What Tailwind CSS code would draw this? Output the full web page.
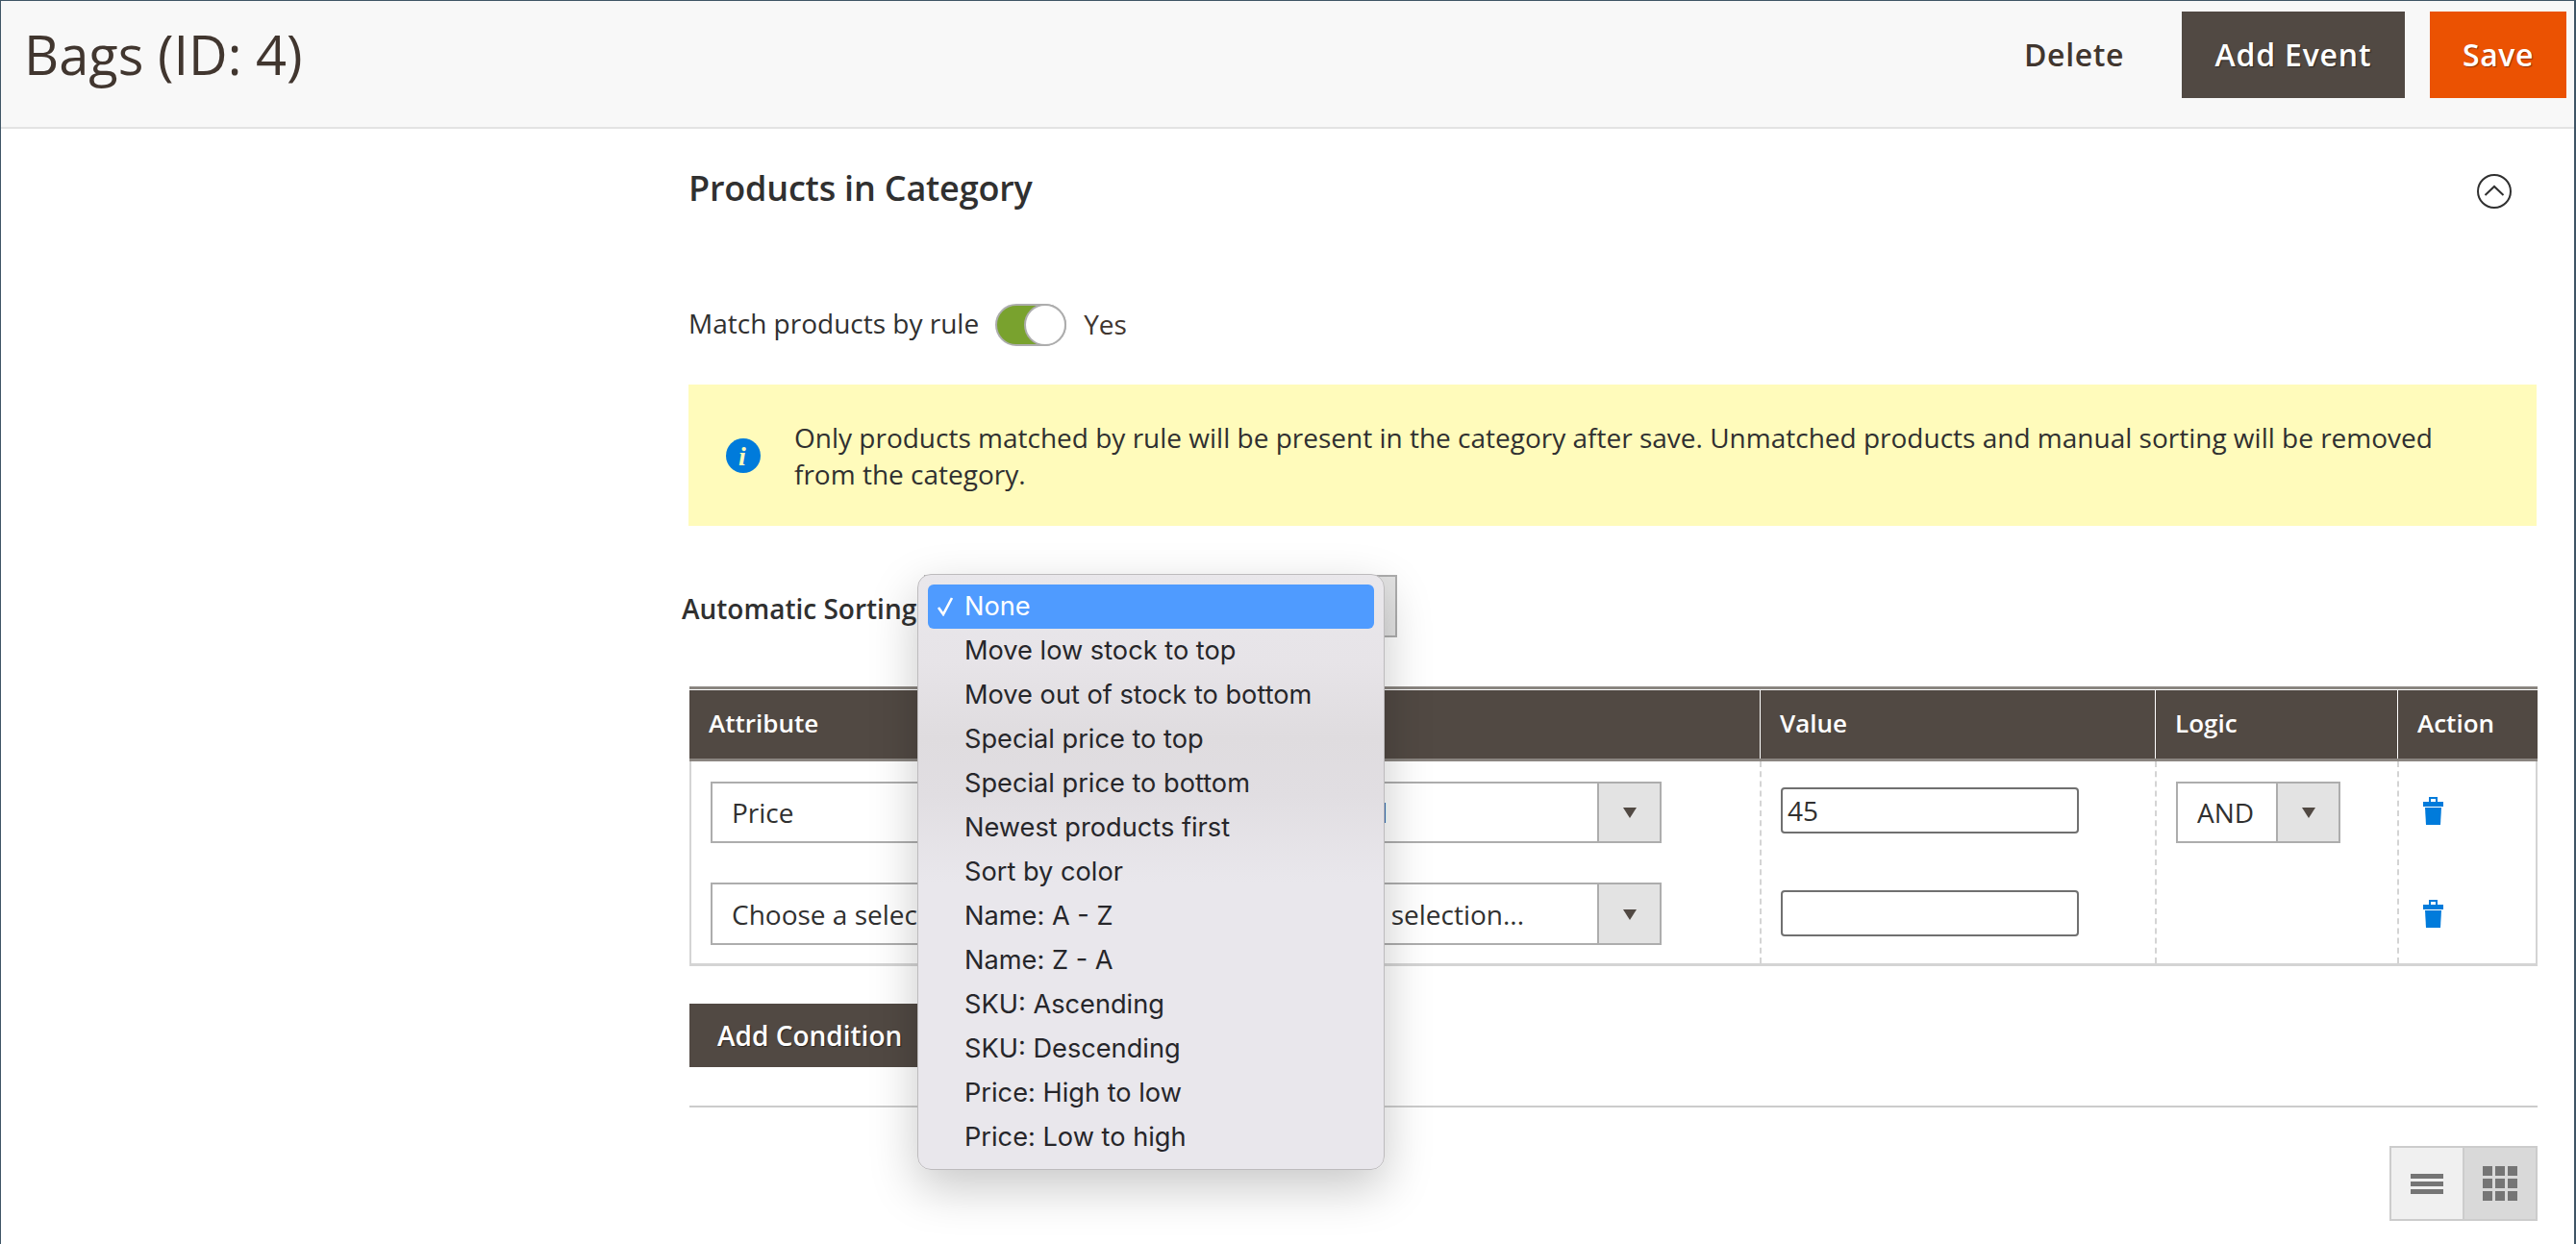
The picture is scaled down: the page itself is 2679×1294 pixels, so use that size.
<!DOCTYPE html>
<html><head><meta charset="utf-8"><script src="https://cdn.jsdelivr.net/npm/@tailwindcss/browser@4"></script></head>
<body class="bg-white">
<div class="relative w-[2679px] h-[1294px] overflow-hidden bg-white border-t border-l border-r-[2px] border-[#3f5566] font-['Open_Sans',sans-serif] text-[#303030]">
  <header class="h-[133px] bg-[#f8f8f8] border-b-[2px] border-[#e3e3e3] flex items-start pl-[24px] pr-[8px]">
    <h1 class="text-[56px] leading-[56px] mt-[27px] font-normal text-[#41362f]">Bags (ID: 4)</h1>
    <div class="ml-auto flex items-start mt-[11px]">
      <button class="h-[90px] text-[32px] font-semibold tracking-[0.6px] text-[#41362f] mr-[60px]">Delete</button>
      <button class="h-[90px] w-[232px] bg-[#514943] text-white text-[32px] font-semibold tracking-[0.8px] [text-shadow:1px_1px_1px_rgba(0,0,0,0.5)] mr-[26px]">Add Event</button>
      <button class="h-[90px] w-[142px] bg-[#eb5202] text-white text-[32px] font-semibold tracking-[0.6px] [text-shadow:1px_1px_1px_rgba(0,0,0,0.4)]">Save</button>
    </div>
  </header>

  <main class="w-[1924px] ml-[713px]">
    <div class="flex items-center justify-between h-[126px] pr-[26px]">
      <h2 class="text-[36px] font-semibold tracking-[-0.2px] pl-[2px] pb-[3px]">Products in Category</h2>
      <svg class="mt-[3px]" width="36" height="36" viewBox="0 0 36 36" fill="none" stroke="#303030" stroke-width="2"><circle cx="18" cy="18" r="17"/><path d="M8.5 22l9.5-9 9.5 9"/></svg>
    </div>
    <div class="flex items-center h-[44px] mt-[56px] pl-[2px] text-[28px]">
      <span class="pb-[5px]">Match products by rule</span>
      <span class="relative ml-[17px] w-[74px] h-[44px] rounded-full bg-[#79a22e] border-[2px] border-[#adadad]">
        <span class="absolute right-[-2px] top-[-2px] w-[44px] h-[44px] rounded-full bg-white border-[2px] border-[#adadad]"></span>
      </span>
      <span class="ml-[18px] pb-[2px] text-[#41362f]">Yes</span>
    </div>
    <div class="flex items-center h-[147px] mt-[40px] bg-[#fffbbb] ml-[2px] pl-[39px] pr-[90px]">
      <svg class="shrink-0" width="36" height="36" viewBox="0 0 36 36"><circle cx="18" cy="18" r="18" fill="#007bdb"/><text x="17" y="28" text-anchor="middle" font-family="Liberation Serif" font-style="italic" font-weight="700" font-size="28" fill="#fffbbb">i</text></svg>
      <p class="ml-[35px] text-[28px] leading-[38px]">Only products matched by rule will be present in the category after save. Unmatched products and manual sorting will be removed from the category.</p>
    </div>
    <div class="h-[66px] mt-[50px] flex items-center">
      <span class="w-[246px] -ml-[5px] pt-[5px] text-[28px] font-semibold whitespace-nowrap">Automatic Sorting</span>
      <div class="ml-[6px] w-[492px] h-[65px] border-[2px] border-[#adadad] bg-[#e3e3e3]"></div>
    </div>

    <div class="mt-[51px] ml-[3px] w-[1922px] text-[28px]">
      <div class="flex h-[78px] bg-[#514943] border-t-[3px] border-b-[3px] border-[#8a8580] text-white font-semibold text-[26px]">
        <div class="w-[574px] pl-[20px] pb-[2px] flex items-center border-t border-white">Attribute</div>
        <div class="w-[539px] border-t border-white"></div>
        <div class="w-[411px] pl-[20px] pb-[2px] flex items-center border-l border-t border-white">Value</div>
        <div class="w-[252px] pl-[20px] pb-[2px] flex items-center border-l border-t border-white">Logic</div>
        <div class="flex-1 pl-[20px] pb-[2px] flex items-center border-l border-t border-white">Action</div>
      </div>
      <div class="flex h-[213px] border-x-[2px] border-b-[3px] border-[#d4d4d4]">
        <div class="w-[1111px] flex flex-col pl-[20px] pt-[21px] gap-[41px]">
          <div class="flex h-[64px]">
            <div class="w-[480px] h-full border-[2px] border-[#adadad] pl-[20px] flex items-center">Price</div>
            <div class="w-[509px] h-full border-[2px] border-[#adadad] flex items-stretch">
              <span class="flex-1 pl-[100px] tracking-[3px] flex items-center whitespace-nowrap">Is equal</span>
              <span class="w-[65px] bg-[#e3e3e3] border-l-[2px] border-[#adadad] flex items-center justify-center"><svg width="14" height="14" viewBox="0 0 14 14"><path d="M0 2h14L7 13z" fill="#514943"/></svg></span>
            </div>
          </div>
          <div class="flex h-[65px]">
            <div class="w-[480px] h-full border-[2px] border-[#adadad] pl-[20px] flex items-center whitespace-nowrap overflow-hidden">Choose a selection...</div>
            <div class="w-[509px] h-full border-[2px] border-[#adadad] flex items-stretch">
              <span class="flex-1 pl-[98px] flex items-center whitespace-nowrap">Choose a selection...</span>
              <span class="w-[65px] bg-[#e3e3e3] border-l-[2px] border-[#adadad] flex items-center justify-center"><svg width="14" height="14" viewBox="0 0 14 14"><path d="M0 2h14L7 13z" fill="#514943"/></svg></span>
            </div>
          </div>
        </div>
        <div class="w-[411px] border-l-[2px] border-dashed border-[#d4d4d4] pl-[20px] pt-[27px] flex flex-col gap-[59px]">
          <input value="45" class="w-[310px] h-[48px] border-[2px] border-[#707070] rounded-[4px] px-[5px] text-[28px] outline-none">
          <input class="w-[310px] h-[48px] border-[2px] border-[#707070] rounded-[4px] px-[5px] text-[28px] outline-none">
        </div>
        <div class="w-[252px] border-l-[2px] border-dashed border-[#d4d4d4] pl-[20px] pt-[21px]">
          <div class="flex h-[64px] w-[171px] border-[2px] border-[#adadad]">
            <span class="flex-1 pl-[20px] flex items-center">AND</span>
            <span class="w-[65px] bg-[#e3e3e3] border-l-[2px] border-[#adadad] flex items-center justify-center"><svg width="14" height="14" viewBox="0 0 14 14"><path d="M0 2h14L7 13z" fill="#514943"/></svg></span>
          </div>
        </div>
        <div class="flex-1 border-l-[2px] border-dashed border-[#d4d4d4] pl-[25px] pt-[37px] flex flex-col gap-[78px]">
          <svg width="21" height="29" viewBox="0 0 21 29" fill="#007bdb"><path fill-rule="evenodd" d="M6 0h9v5h6v5H0V5h6zM8 2v3h5V2z"/><path d="M2 11h17l-1 18H3z"/></svg>
          <svg width="21" height="29" viewBox="0 0 21 29" fill="#007bdb"><path fill-rule="evenodd" d="M6 0h9v5h6v5H0V5h6zM8 2v3h5V2z"/><path d="M2 11h17l-1 18H3z"/></svg>
        </div>
      </div>
    </div>

    <div class="ml-[3px] mt-[39px] w-[250px] h-[66px] bg-[#514943] text-white text-[28px] font-semibold [text-shadow:1px_1px_1px_rgba(0,0,0,0.5)] flex items-center pl-[29px]">Add Condition</div>
    <div class="ml-[3px] mt-[40px] w-[1922px] h-[2px] bg-[#cccccc]"></div>
    <div class="ml-[3px] w-[1922px] mt-[40px] flex justify-end">
      <div class="flex w-[154px] h-[78px] border-[2px] border-[#cccccc]">
        <div class="flex-1 bg-[#f0f0f0] border-r-[2px] border-[#cccccc] flex flex-col items-center justify-center gap-[3px]">
          <span class="w-[34px] h-[5px] bg-[#757575]"></span><span class="w-[34px] h-[5px] bg-[#757575]"></span><span class="w-[34px] h-[5px] bg-[#757575]"></span>
        </div>
        <div class="flex-1 bg-[#d9d9d9] flex items-center justify-center">
          <div class="grid grid-cols-3 gap-[3px]">
            <span class="w-[10px] h-[10px] bg-[#757575]"></span><span class="w-[10px] h-[10px] bg-[#757575]"></span><span class="w-[10px] h-[10px] bg-[#757575]"></span>
            <span class="w-[10px] h-[10px] bg-[#757575]"></span><span class="w-[10px] h-[10px] bg-[#757575]"></span><span class="w-[10px] h-[10px] bg-[#757575]"></span>
            <span class="w-[10px] h-[10px] bg-[#757575]"></span><span class="w-[10px] h-[10px] bg-[#757575]"></span><span class="w-[10px] h-[10px] bg-[#757575]"></span>
          </div>
        </div>
      </div>
    </div>
  </main>

  <div class="absolute left-[953px] top-[596px] w-[486px] h-[620px] rounded-[14px] bg-[linear-gradient(180deg,#e9e7eb_0px,#e7e4e8_90px,#dfdcdf_170px,#e1dee2_230px,#e9e7ec_320px,#e9e7ec_620px)] border border-[#bdbbbd] shadow-[0_18px_50px_rgba(0,0,0,0.22)] px-[10px] pt-[10px] font-['Inter',sans-serif] text-[27.2px] leading-[46px] text-[#26262a]">
    <div class="relative h-[46px] rounded-[6px] bg-[#4f9bff] text-white pl-[38px]"><svg class="absolute left-[9px] top-[13px]" width="19" height="20" viewBox="0 0 19 20" fill="none" stroke="#fff" stroke-width="2.6"><path d="M2 11l5 7L16 1"/></svg>None</div>
    <div class="pl-[38px]">Move low stock to top</div>
    <div class="pl-[38px]">Move out of stock to bottom</div>
    <div class="pl-[38px]">Special price to top</div>
    <div class="pl-[38px]">Special price to bottom</div>
    <div class="pl-[38px]">Newest products first</div>
    <div class="pl-[38px]">Sort by color</div>
    <div class="pl-[38px]">Name: A - Z</div>
    <div class="pl-[38px]">Name: Z - A</div>
    <div class="pl-[38px]">SKU: Ascending</div>
    <div class="pl-[38px]">SKU: Descending</div>
    <div class="pl-[38px]">Price: High to low</div>
    <div class="pl-[38px]">Price: Low to high</div>
  </div>
</div>
</body></html>
